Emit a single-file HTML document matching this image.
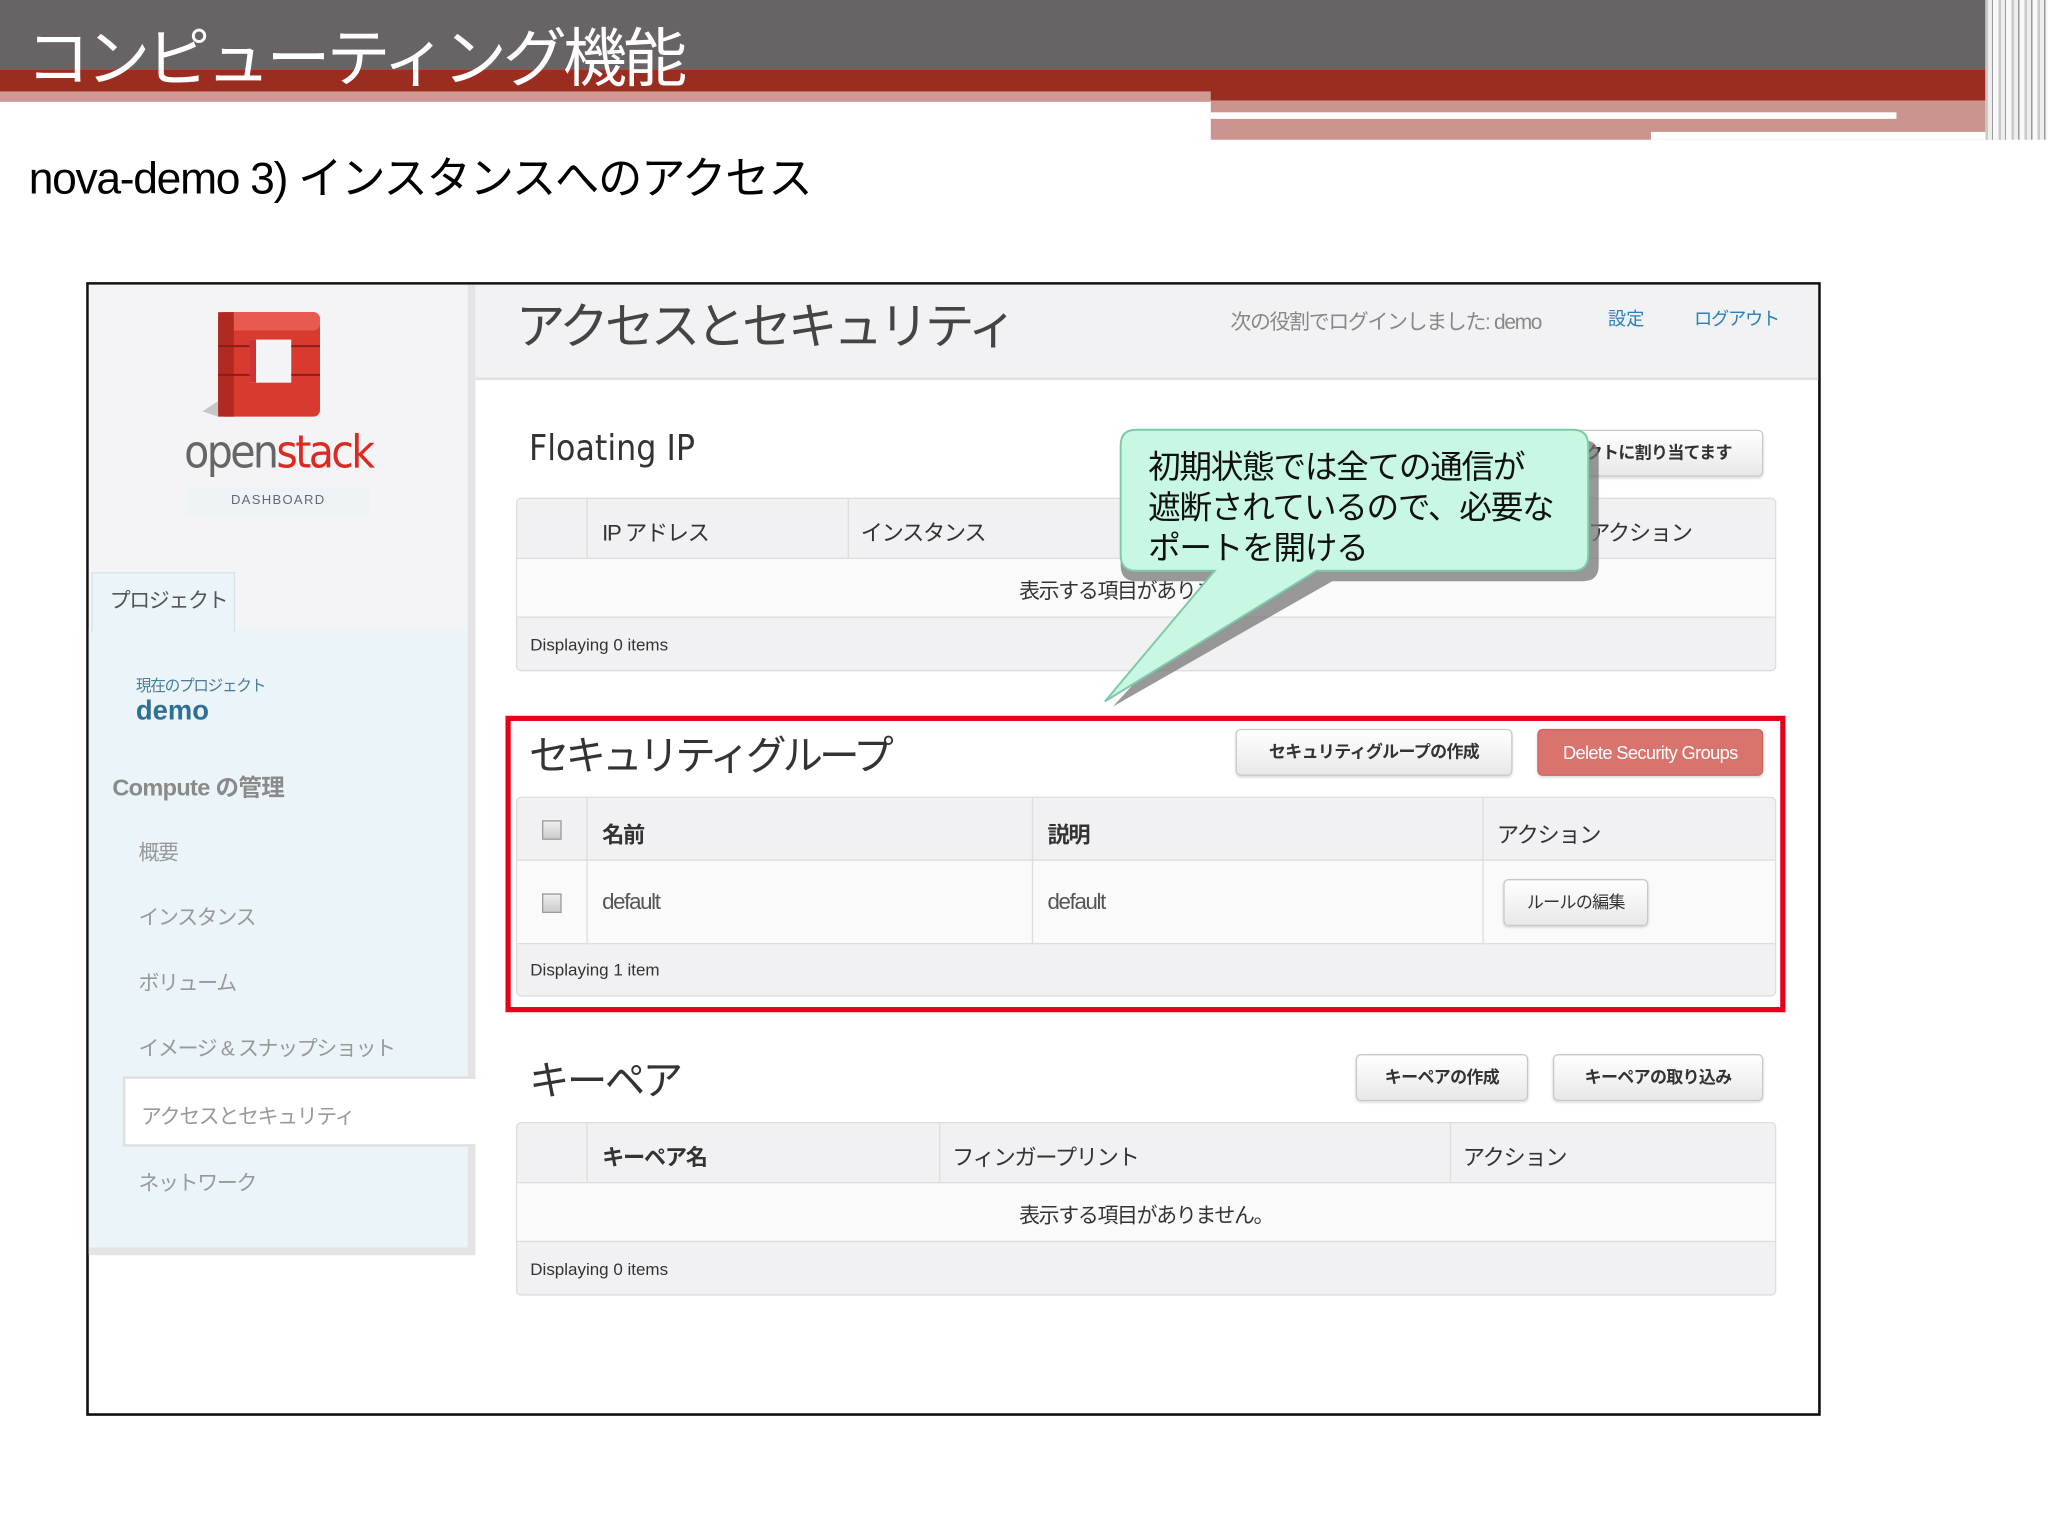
<!DOCTYPE html>
<html><head><meta charset="utf-8"><style>
*{margin:0;padding:0;box-sizing:border-box}
html,body{width:2048px;height:1536px;overflow:hidden;background:#fff}
#w{position:absolute;left:0;top:0;width:1568px;height:1176px;transform:scale(1.306122);transform-origin:0 0;font-family:"Liberation Sans","Noto Sans CJK JP",sans-serif}
.a{position:absolute}
.t{white-space:nowrap}
.btn{position:absolute;height:36px;border:1px solid #c8c8c8;border-radius:4px;background:linear-gradient(#fff,#e8e8e8);font-size:13px;font-weight:bold;color:#333;text-align:center;line-height:34px;box-shadow:0 1px 2px rgba(0,0,0,.15);overflow:hidden;letter-spacing:-.5px}
.tbl{position:absolute;left:395px;width:965px;border:1px solid #ddd;border-radius:4px;background:#f1f1f3}
.th{font-size:17px;color:#333;letter-spacing:-1px}
.nav{position:absolute;left:106px;font-size:16px;color:#999;letter-spacing:-1px}
</style></head><body><div id="w">
<div class="a" style="left:0;top:0;width:1568px;height:53px;background:#686364"></div>
<div class="a" style="left:0;top:53px;width:1568px;height:24px;background:#9b2d20"></div>
<div class="a" style="left:0;top:70px;width:927px;height:8px;background:#d09a94"></div>
<div class="a" style="left:927px;top:77px;width:610px;height:30px;background:#cc948f"></div>
<div class="a" style="left:927px;top:86px;width:525px;height:5px;background:#fff"></div>
<div class="a" style="left:1264px;top:101px;width:273px;height:6px;background:#fff"></div>
<div class="a" style="left:1520px;top:0;width:48px;height:107px;background:repeating-linear-gradient(90deg,#c9c9c9 0 2px,#eee 2px 5px,#9a9a9a 5px 6px,#f8f8f8 6px 10px)"></div>
<div class="a t" style="left:20px;top:16px;font-size:49px;color:#fff;letter-spacing:-3px;line-height:60px">コンピューティング機能</div>
<div class="a t" style="left:22px;top:116px;font-size:34px;color:#000;line-height:42px;letter-spacing:-1px">nova-demo 3) インスタンスへのアクセス</div>

<div class="a" style="left:66px;top:216px;width:1328px;height:868px;border:2px solid #111;background:#fff"></div>
<div class="a" style="left:68px;top:218px;width:290px;height:742px;background:#f4f4f6"></div>
<div class="a" style="left:358px;top:218px;width:6px;height:742px;background:#e4e4e6"></div>
<div class="a" style="left:68px;top:955px;width:296px;height:6px;background:#e4e4e6"></div>
<div class="a" style="left:364px;top:218px;width:1028px;height:73px;background:#f2f2f4;border-bottom:2px solid #e0e0e0"></div>

<svg class="a" style="left:155px;top:235px" width="95" height="88" viewBox="0 0 95 88">
<path d="M0 80 L12 72 L12 84 Z" fill="#999" opacity=".5"/>
<rect x="12" y="4" width="78" height="80" rx="5" fill="#d93a2f"/>
<rect x="12" y="4" width="78" height="14" rx="5" fill="#e65a50"/>
<rect x="12" y="4" width="12" height="80" fill="#b02a22"/>
<rect x="36" y="25" width="32" height="33" fill="#f4f4f6"/>
<rect x="36" y="25" width="5" height="33" fill="#c33"/>
<line x1="12" y1="30" x2="36" y2="30" stroke="#8a1d18" stroke-width="1.5"/>
<line x1="68" y1="30" x2="90" y2="30" stroke="#8a1d18" stroke-width="1.5"/>
<line x1="12" y1="52" x2="36" y2="52" stroke="#8a1d18" stroke-width="1.5"/>
<line x1="68" y1="52" x2="90" y2="52" stroke="#8a1d18" stroke-width="1.5"/>
</svg>
<div class="a t" style="left:141px;top:324px;font-size:35px;letter-spacing:-2px;line-height:46px;font-family:'DejaVu Sans Condensed','Liberation Sans',sans-serif"><span style="color:#666">open</span><span style="color:#da2a23">stack</span></div>
<div class="a" style="left:143px;top:373px;width:140px;height:22px;background:#eef3f5;font-size:10px;color:#667;text-align:center;line-height:22px;letter-spacing:1px">DASHBOARD</div>

<div class="a" style="left:68px;top:482px;width:290px;height:473px;background:#ebf4f9"></div>
<div class="a t" style="left:70px;top:438px;width:110px;height:46px;background:#ebf4f9;border:1px solid #d6e4ec;border-bottom:none;font-size:16px;color:#555;line-height:44px;padding-left:13px;letter-spacing:-1px">プロジェクト</div>
<div class="a t" style="left:104px;top:516px;font-size:12px;color:#4a7d99;letter-spacing:-1px">現在のプロジェクト</div>
<div class="a t" style="left:104px;top:533px;font-size:21px;font-weight:bold;color:#2e6f95">demo</div>
<div class="a t" style="left:86px;top:589px;font-size:18px;font-weight:bold;color:#8a8a8a;letter-spacing:-.5px">Compute の管理</div>
<div class="nav t" style="top:639px">概要</div>
<div class="nav t" style="top:689px">インスタンス</div>
<div class="nav t" style="top:789px;top:789px">イメージ &amp; スナップショット</div>
<div class="nav t" style="top:739px">ボリューム</div>
<div class="a" style="left:94px;top:824px;width:270px;height:54px;background:#fff;border:2px solid #e0e0e0;border-right:none"></div>
<div class="nav t" style="top:841px;left:108px;color:#999">アクセスとセキュリティ</div>
<div class="nav t" style="top:892px">ネットワーク</div>

<div class="a t" style="left:395px;top:226px;font-size:38px;color:#444;line-height:50px;letter-spacing:-3px">アクセスとセキュリティ</div>
<div class="a t" style="left:942px;top:233px;font-size:16px;color:#888;letter-spacing:-1px">次の役割でログインしました: demo</div>
<div class="a t" style="left:1231px;top:234px;font-size:14px;color:#2a80b9">設定</div>
<div class="a t" style="left:1297px;top:234px;font-size:14px;color:#2a80b9;letter-spacing:-1px">ログアウト</div>

<div class="a t" style="left:405px;top:328px;font-size:27px;color:#333;font-family:'DejaVu Sans Condensed','Liberation Sans',sans-serif">Floating IP</div>
<div class="btn t" style="left:1140px;top:329px;width:210px">プロジェクトに割り当てます</div>
<div class="tbl" style="top:381px;height:133px">
<div class="a" style="left:0;top:45px;width:963px;height:46px;background:#fafafa;border-top:1px solid #ddd;border-bottom:1px solid #ddd"></div>
<div class="a" style="left:53px;top:0;width:1px;height:45px;background:#ddd"></div>
<div class="a" style="left:253px;top:0;width:1px;height:45px;background:#ddd"></div>
<div class="a th t" style="left:65px;top:12px">IP アドレス</div>
<div class="a th t" style="left:263px;top:12px">インスタンス</div>
<div class="a th t" style="left:820px;top:12px">アクション</div>
<div class="a t" style="left:0;top:57px;width:963px;text-align:center;font-size:16px;color:#333;letter-spacing:-1px">表示する項目がありません。</div>
<div class="a t" style="left:10px;top:104px;font-size:13px;color:#333">Displaying 0 items</div>
</div>

<div class="a" style="left:387px;top:548px;width:980px;height:227px;border:4px solid #e8001a"></div>
<div class="a t" style="left:405px;top:553px;font-size:31px;color:#333;letter-spacing:-3px">セキュリティグループ</div>
<div class="btn t" style="left:946px;top:558px;width:212px">セキュリティグループの作成</div>
<div class="btn t" style="left:1177px;top:558px;width:173px;background:#d9736e;border-color:#d06560;color:#fff;font-weight:normal;font-size:14px">Delete Security Groups</div>
<div class="tbl" style="top:610px;height:153px">
<div class="a" style="left:0;top:47px;width:963px;height:65px;background:#fafafa;border-top:1px solid #ddd;border-bottom:1px solid #ddd"></div>
<div class="a" style="left:53px;top:0;width:1px;height:112px;background:#ddd"></div>
<div class="a" style="left:394px;top:0;width:1px;height:112px;background:#ddd"></div>
<div class="a" style="left:739px;top:0;width:1px;height:112px;background:#ddd"></div>
<div class="a" style="left:19px;top:17px;width:15px;height:15px;border:1px solid #999;background:linear-gradient(#eee,#ccc)"></div>
<div class="a" style="left:19px;top:73px;width:15px;height:15px;border:1px solid #999;background:linear-gradient(#eee,#ccc)"></div>
<div class="a th t" style="left:65px;top:14px;font-weight:bold">名前</div>
<div class="a th t" style="left:406px;top:14px;font-weight:bold">説明</div>
<div class="a th t" style="left:750px;top:14px">アクション</div>
<div class="a th t" style="left:65px;top:70px;color:#555">default</div>
<div class="a th t" style="left:406px;top:70px;color:#555">default</div>
<div class="btn t" style="left:755px;top:62px;width:111px;font-weight:normal;font-size:13px">ルールの編集</div>
<div class="a t" style="left:10px;top:124px;font-size:13px;color:#333">Displaying 1 item</div>
</div>

<div class="a t" style="left:405px;top:802px;font-size:31px;color:#333;letter-spacing:-2px">キーペア</div>
<div class="btn t" style="left:1038px;top:807px;width:132px">キーペアの作成</div>
<div class="btn t" style="left:1189px;top:807px;width:161px">キーペアの取り込み</div>
<div class="tbl" style="top:859px;height:133px">
<div class="a" style="left:0;top:45px;width:963px;height:46px;background:#fafafa;border-top:1px solid #ddd;border-bottom:1px solid #ddd"></div>
<div class="a" style="left:53px;top:0;width:1px;height:45px;background:#ddd"></div>
<div class="a" style="left:323px;top:0;width:1px;height:45px;background:#ddd"></div>
<div class="a" style="left:714px;top:0;width:1px;height:45px;background:#ddd"></div>
<div class="a th t" style="left:65px;top:12px;font-weight:bold">キーペア名</div>
<div class="a th t" style="left:333px;top:12px">フィンガープリント</div>
<div class="a th t" style="left:724px;top:12px">アクション</div>
<div class="a t" style="left:0;top:57px;width:963px;text-align:center;font-size:16px;color:#333;letter-spacing:-1px">表示する項目がありません。</div>
<div class="a t" style="left:10px;top:104px;font-size:13px;color:#333">Displaying 0 items</div>
</div>

<svg class="a" style="left:840px;top:325px" width="400" height="220" viewBox="0 0 400 220">
<path d="M30 12 H372 Q384 12 384 24 V108 Q384 120 372 120 H180 L12 216 L100 120 H30 Q18 120 18 108 V24 Q18 12 30 12 Z" fill="#777" opacity=".75"/>
<path d="M30 4 H364 Q376 4 376 16 V100 Q376 112 364 112 H168 L6 212 L90 112 H30 Q18 112 18 100 V16 Q18 4 30 4 Z" fill="#c8f7e3" stroke="#7fc9a8" stroke-width="1.5"/>
</svg>
<div class="a" style="left:879px;top:343px;font-size:25px;line-height:31px;color:#111;letter-spacing:-1px">初期状態では全ての通信が<br>遮断されているので、必要な<br>ポートを開ける</div>
</div></body></html>
